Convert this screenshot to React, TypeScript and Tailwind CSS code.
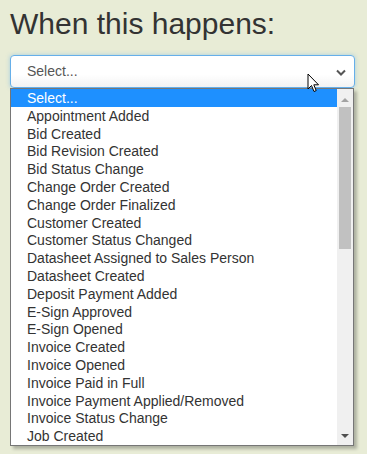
import React from "react";

const items = [
  "Select...",
  "Appointment Added",
  "Bid Created",
  "Bid Revision Created",
  "Bid Status Change",
  "Change Order Created",
  "Change Order Finalized",
  "Customer Created",
  "Customer Status Changed",
  "Datasheet Assigned to Sales Person",
  "Datasheet Created",
  "Deposit Payment Added",
  "E-Sign Approved",
  "E-Sign Opened",
  "Invoice Created",
  "Invoice Opened",
  "Invoice Paid in Full",
  "Invoice Payment Applied/Removed",
  "Invoice Status Change",
  "Job Created",
];

export default function App() {
  return (
    <div
      className="w-[367px] h-[454px] bg-[#e8ecd6] overflow-hidden relative"
      style={{ fontFamily: '"Liberation Sans", Arial, sans-serif' }}
    >
      <div className="pl-[10px] pt-[7px]">
        <h1 className="text-[30px] leading-[34px] text-[#333333] font-normal">When this happens:</h1>
        <div className="mt-[14px] w-[345px] h-[33px] rounded-[4px] border border-[#66afe9] bg-gradient-to-b from-white from-60% to-[#f3f3f3] shadow-[0_0_4px_rgba(102,175,233,0.5)] flex items-center pl-[16px] pr-[8px]">
          <span className="text-[14px] text-[#555555] flex-1">Select...</span>
          <svg width="10" height="7" viewBox="0 0 10 7" className="mt-[1px]">
            <path d="M1 1.5 L5 5.5 L9 1.5" stroke="#555" strokeWidth="2" fill="none" />
          </svg>
        </div>
        <div className="w-[344px] h-[358px] border border-[#767676] bg-white flex shadow-[3px_3px_3px_rgba(0,0,0,0.25)]">
          <div className="flex-1 flex flex-col">
            {items.map((t, i) => (
              <div
                key={t}
                className={
                  "h-[17.8px] pt-px leading-[16.8px] pl-[16px] text-[14px] whitespace-nowrap " +
                  (i === 0 ? "bg-[#1e90ff] text-white" : "text-[#333333]")
                }
              >
                {t}
              </div>
            ))}
          </div>
          <div className="w-[16px] bg-[#f0f0f0] flex flex-col items-center">
            <svg width="8" height="5" viewBox="0 0 8 5" className="mt-[8px]">
              <path d="M0 5 L4 1 L8 5 Z" fill="#a3a3a3" />
            </svg>
            <div className="mt-[5px] w-[12px] h-[142px] bg-[#c1c1c1]" />
            <div className="flex-1" />
            <svg width="8" height="5" viewBox="0 0 8 5" className="mb-[6px]">
              <path d="M0 0 L8 0 L4 4 Z" fill="#505050" />
            </svg>
          </div>
        </div>
      </div>
      <svg
        className="absolute left-[307px] top-[73px]"
        width="13"
        height="20"
        viewBox="0 0 13 20"
      >
        <path
          d="M1 1 L1 16 L4.5 12.5 L7 18.5 L9.2 17.6 L6.8 11.8 L11.5 11.8 Z"
          fill="#fff"
          stroke="#000"
          strokeWidth="1"
          strokeLinejoin="miter"
        />
      </svg>
    </div>
  );
}
